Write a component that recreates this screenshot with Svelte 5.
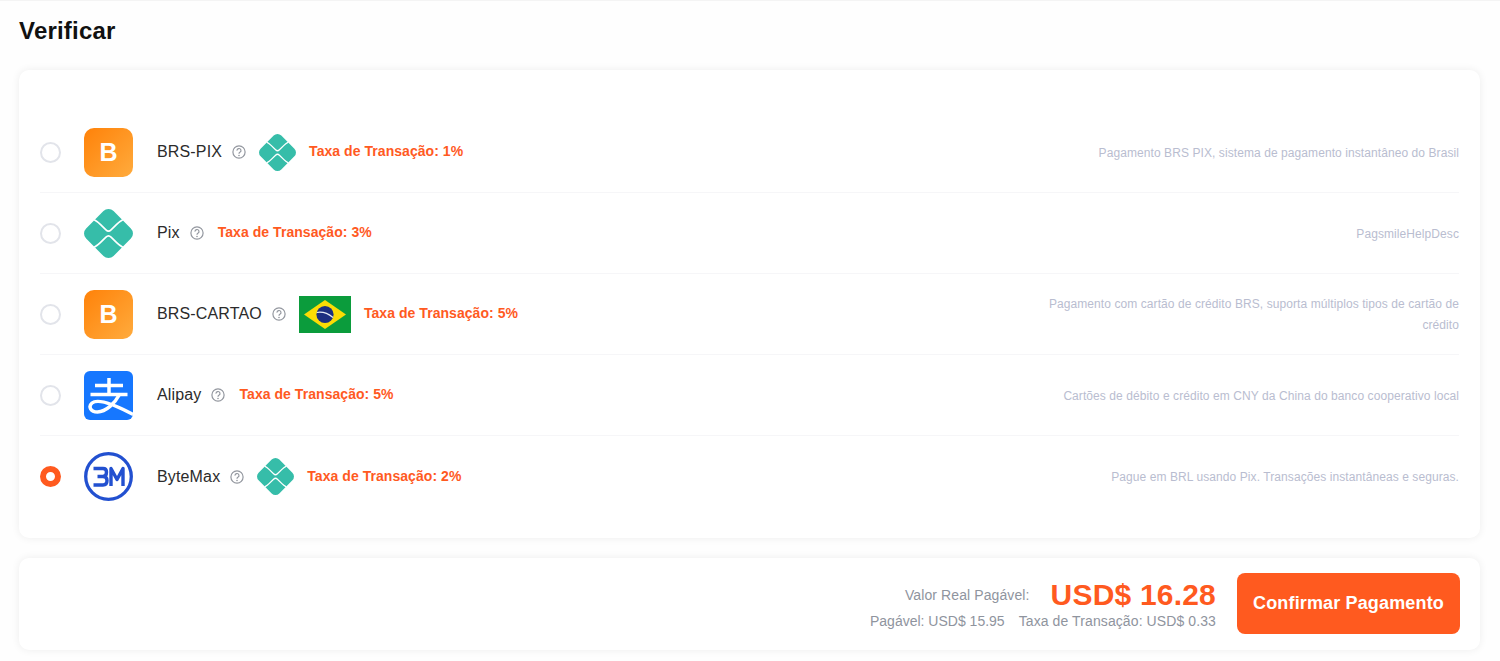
<script>
  const methods = [
    { name: 'BRS-PIX', icon: 'brs', badge: 'pix', rate: 1, desc: 'Pagamento BRS PIX, sistema de pagamento instantâneo do Brasil' },
    { name: 'Pix', icon: 'pix', badge: null, rate: 3, desc: 'PagsmileHelpDesc' },
    { name: 'BRS-CARTAO', icon: 'brs', badge: 'flag', rate: 5, desc: 'Pagamento com cartão de crédito BRS, suporta múltiplos tipos de cartão de crédito' },
    { name: 'Alipay', icon: 'alipay', badge: null, rate: 5, desc: 'Cartões de débito e crédito em CNY da China do banco cooperativo local' },
    { name: 'ByteMax', icon: 'bytemax', badge: 'pix', rate: 2, desc: 'Pague em BRL usando Pix. Transações instantâneas e seguras.' }
  ];

  let selected = $state('ByteMax');
</script>

{#snippet pixLogo(size)}
  <svg class="pix" width={size} height={size} viewBox="0 0 48 48" aria-hidden="true">
    <rect x="5" y="5" width="38" height="38" rx="7" fill="#36bda9" transform="rotate(45 24 24)" />
    <path d="M10 10.5 Q13.5 12.5 16 15 L21.5 20.5 Q24 23 26.5 20.5 L32 15 Q34.5 12.5 38 10.5" fill="none" stroke="#fff" stroke-width="1.6" />
    <path d="M10 37.5 Q13.5 35.5 16 33 L21.5 27.5 Q24 25 26.5 27.5 L32 33 Q34.5 35.5 38 37.5" fill="none" stroke="#fff" stroke-width="1.6" />
  </svg>
{/snippet}

<main class="page">
  <h1>Verificar</h1>

  <section class="card list">
    {#each methods as m}
      <label class="row">
        <input type="radio" name="method" value={m.name} bind:group={selected} />
        <span class="logo">
          {#if m.icon === 'brs'}
            <span class="tile">B</span>
          {:else if m.icon === 'pix'}
            {@render pixLogo(49)}
          {:else if m.icon === 'alipay'}
            <svg width="49" height="49" viewBox="0 0 49 49" aria-hidden="true">
              <defs>
                <clipPath id="alipay-tile"><rect width="49" height="49" rx="6" /></clipPath>
              </defs>
              <rect width="49" height="49" rx="6" fill="#1677ff" />
              <g fill="none" stroke="#fff" stroke-width="3.5" clip-path="url(#alipay-tile)">
                <path d="M11 14.5 H39" />
                <path d="M25 7 V23" />
                <path d="M6.5 23.5 H43.5" />
                <path d="M35.5 23.5 C31 32 22 41 13.5 41 C6.5 41 4 35.5 8 32 C14 27 30 33 52 45" />
              </g>
            </svg>
          {:else}
            <svg width="49" height="49" viewBox="0 0 49 49" aria-hidden="true">
              <circle cx="24.5" cy="24.5" r="22.8" fill="#fff" stroke="#2250d0" stroke-width="3.3" />
              <g fill="none" stroke="#2250d0" stroke-width="3.4" stroke-linejoin="round">
                <path d="M9.5 16.5 H19 Q22.5 16.5 22.5 20 Q22.5 24.5 19 24.5 H13.5 M19 24.5 Q23 24.5 23 28.5 Q23 33 19 33 H9.5" />
                <path d="M27 34 V16.5 L33 27.5 L39 16.5 V34" />
              </g>
            </svg>
          {/if}
        </span>
        <span class="name">{m.name}</span>
        <svg class="help" width="14" height="14" viewBox="0 0 14 14" aria-hidden="true">
          <circle cx="7" cy="7" r="6.1" fill="none" stroke="#93979f" stroke-width="1.2" />
          <path d="M5 5.6 A2 2 0 1 1 7.9 7.3 Q7 7.8 7 8.7" fill="none" stroke="#93979f" stroke-width="1.2" />
          <circle cx="7" cy="10.5" r="0.8" fill="#93979f" />
        </svg>
        {#if m.badge === 'pix'}
          {@render pixLogo(37)}
        {:else if m.badge === 'flag'}
          <svg class="flag" width="52" height="37" viewBox="0 0 52 37" aria-hidden="true">
            <rect width="52" height="37" fill="#0b9c3c" />
            <path d="M5 18.5 L26 4 L47 18.5 L26 33 Z" fill="#fbdc05" />
            <circle cx="26" cy="18.5" r="8.6" fill="#1c2f80" />
            <path d="M17.8 16.5 Q26 15 34 21.5" fill="none" stroke="#e8eef5" stroke-width="1.2" />
          </svg>
        {/if}
        <span class="rate">Taxa de Transação: {m.rate}%</span>
        <span class="desc">{m.desc}</span>
      </label>
    {/each}
  </section>

  <section class="card footer">
    <div class="amounts">
      <div class="total">
        <span class="label">Valor Real Pagável:</span>
        <span class="value">USD$ 16.28</span>
      </div>
      <div class="breakdown">
        <span class="payable">Pagável: USD$ 15.95</span>
        <span>Taxa de Transação: USD$ 0.33</span>
      </div>
    </div>
    <button type="button">Confirmar Pagamento</button>
  </section>
</main>

<style>
  :global(body) {
    background: #fefefe;
    font-family: "Liberation Sans", Arial, sans-serif;
  }

  .page {
    height: 661px;
    box-sizing: border-box;
    padding: 0 20px 0 19px;
    border-top: 1px solid #f4f4f4;
    overflow: hidden;
  }

  h1 {
    margin: 0;
    padding-top: 15px;
    height: 54px;
    box-sizing: border-box;
    font-size: 24px;
    line-height: 30px;
    font-weight: 700;
    letter-spacing: 0.2px;
    color: #111;
  }

  .card {
    background: #fff;
    border-radius: 10px;
    box-shadow: 0 0 8px rgba(0, 0, 0, 0.07);
  }

  .list {
    margin-top: 15px;
    height: 468px;
    box-sizing: border-box;
    padding: 42px 21px 0;
  }

  .row {
    display: flex;
    align-items: center;
    height: 81px;
    box-sizing: border-box;
    border-bottom: 1px solid #f6f6f8;
  }

  .row:last-child {
    border-bottom: none;
  }

  input {
    appearance: none;
    flex: none;
    width: 21px;
    height: 21px;
    margin: 0 23px 0 0;
    border: 2px solid #e2e4ea;
    border-radius: 50%;
    background: #fff;
  }

  input:checked {
    border: 6.5px solid #ff5a1f;
  }

  .logo {
    flex: none;
    display: block;
    width: 49px;
    height: 49px;
    margin-right: 24px;
  }

  .logo svg {
    display: block;
  }

  .tile {
    display: flex;
    align-items: center;
    justify-content: center;
    height: 100%;
    border-radius: 10px;
    background: linear-gradient(135deg, #ff8209, #ffab3d);
    color: #fff;
    font-size: 25px;
    font-weight: 700;
  }

  .name {
    font-size: 16px;
    letter-spacing: 0.15px;
    color: #2b2b2b;
  }

  .help {
    flex: none;
    margin-left: 10px;
  }

  .pix,
  .flag {
    flex: none;
  }

  .row > .pix,
  .flag {
    margin-left: 13px;
  }

  .rate {
    margin-left: 14px;
    padding-bottom: 2px;
    white-space: nowrap;
    font-size: 14px;
    font-weight: 700;
    letter-spacing: 0.05px;
    color: #ff5a1f;
  }

  .row > .pix + .rate,
  .flag + .rate {
    margin-left: 13px;
  }

  .desc {
    flex: none;
    width: 420px;
    margin-left: auto;
    padding-top: 2px;
    text-align: right;
    font-size: 12px;
    line-height: 21px;
    letter-spacing: 0.08px;
    color: #b9bdd0;
  }

  .footer {
    margin-top: 20px;
    height: 92px;
    box-sizing: border-box;
    padding: 0 20px 2px 0;
    display: flex;
    align-items: center;
    justify-content: flex-end;
    gap: 21px;
  }

  .amounts {
    text-align: right;
    color: #8f949e;
    font-size: 14px;
    letter-spacing: 0.1px;
  }

  .total {
    display: flex;
    align-items: center;
    justify-content: flex-end;
    gap: 21px;
    height: 32px;
    margin-top: 2px;
  }

  .value {
    font-size: 30px;
    font-weight: 700;
    letter-spacing: 0.2px;
    color: #ff5a1f;
  }

  .breakdown {
    display: flex;
    justify-content: flex-end;
    gap: 14px;
    margin-top: 2px;
  }

  .payable {
    letter-spacing: 0;
  }

  button {
    width: 223px;
    height: 61px;
    border: none;
    border-radius: 8px;
    background: #ff5a1f;
    color: #fff;
    font-family: inherit;
    font-size: 18px;
    font-weight: 700;
    letter-spacing: 0.15px;
  }
</style>
